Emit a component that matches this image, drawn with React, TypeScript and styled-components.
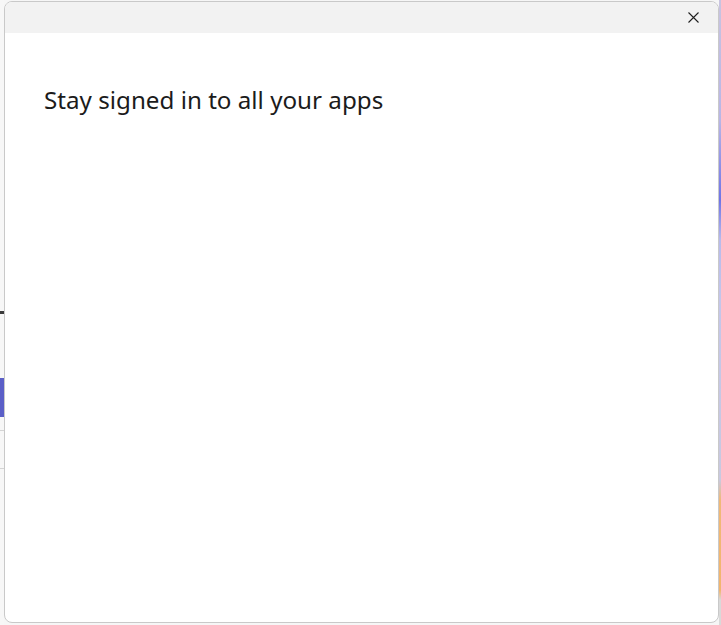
import React from "react";
import styled, { createGlobalStyle } from "styled-components";

const Global = createGlobalStyle`
  html, body { margin: 0; padding: 0; background: #f4f4f4; }
  body { font-family: "Noto Sans", "Open Sans", sans-serif; }
`;

const Screen = styled.div`
  width: 721px;
  height: 625px;
  display: flex;
  background: #f6f6f6;
  overflow: hidden;
`;

const LeftStrip = styled.div`
  width: 4px;
  display: flex;
  flex-direction: column;
  background: #f7f7f7;
`;

const StripGap = styled.div<{ $h: number }>`
  height: ${(p) => p.$h}px;
  flex: none;
`;

const StripMark = styled.div<{ $h: number; $c: string }>`
  height: ${(p) => p.$h}px;
  background: ${(p) => p.$c};
  flex: none;
`;

const Column = styled.div`
  flex: 1;
  display: flex;
  flex-direction: column;
  padding: 1px 0 2px 0;
`;

const Window = styled.div`
  flex: 1;
  display: flex;
  flex-direction: column;
  background: #ffffff;
  border: 1px solid #c9c9c9;
  border-radius: 8px;
  overflow: hidden;
`;

const TitleBar = styled.div`
  height: 31px;
  flex: none;
  background: #f2f2f2;
  display: flex;
  justify-content: flex-end;
  align-items: center;
`;

const CloseButton = styled.button`
  width: 46px;
  height: 31px;
  border: none;
  background: transparent;
  display: flex;
  align-items: center;
  justify-content: center;
  padding: 0;
  margin-right: 2px;
`;

const Body = styled.div`
  flex: 1;
  padding: 51px 39px;
`;

const Heading = styled.h1`
  margin: 0;
  font-family: "Noto Sans", "Open Sans", sans-serif;
  font-weight: 400;
  font-size: 24.2px;
  line-height: 32px;
  color: #1b1b1b;
`;

const RightStrip = styled.div`
  width: 2px;
  background: linear-gradient(
    to bottom,
    #c8c4e0 0px,
    #b9b6e6 120px,
    #6f74e6 200px,
    #b8bbec 240px,
    #c4c6ea 300px,
    #c9c9df 480px,
    #f0b978 500px,
    #f2b56e 590px,
    #d9d9d9 600px,
    #d9d9d9 625px
  );
`;

export default function App() {
  return (
    <>
      <Global />
      <Screen>
        <LeftStrip>
          <StripGap $h={311} />
          <StripMark $h={3} $c="#3a3a3a" />
          <StripGap $h={64} />
          <StripMark $h={39} $c="#5b5fc7" />
          <StripGap $h={13} />
          <StripMark $h={1} $c="#d4d4d4" />
          <StripGap $h={37} />
          <StripMark $h={1} $c="#d4d4d4" />
        </LeftStrip>
        <Column>
          <Window>
            <TitleBar>
              <CloseButton aria-label="Close">
                <svg width="11" height="11" viewBox="0 0 11 11">
                  <path d="M0.5 0.5 L10.5 10.5 M10.5 0.5 L0.5 10.5" stroke="#1f1f1f" strokeWidth="1.1" />
                </svg>
              </CloseButton>
            </TitleBar>
            <Body>
              <Heading>Stay signed in to all your apps</Heading>
            </Body>
          </Window>
        </Column>
        <RightStrip />
      </Screen>
    </>
  );
}
